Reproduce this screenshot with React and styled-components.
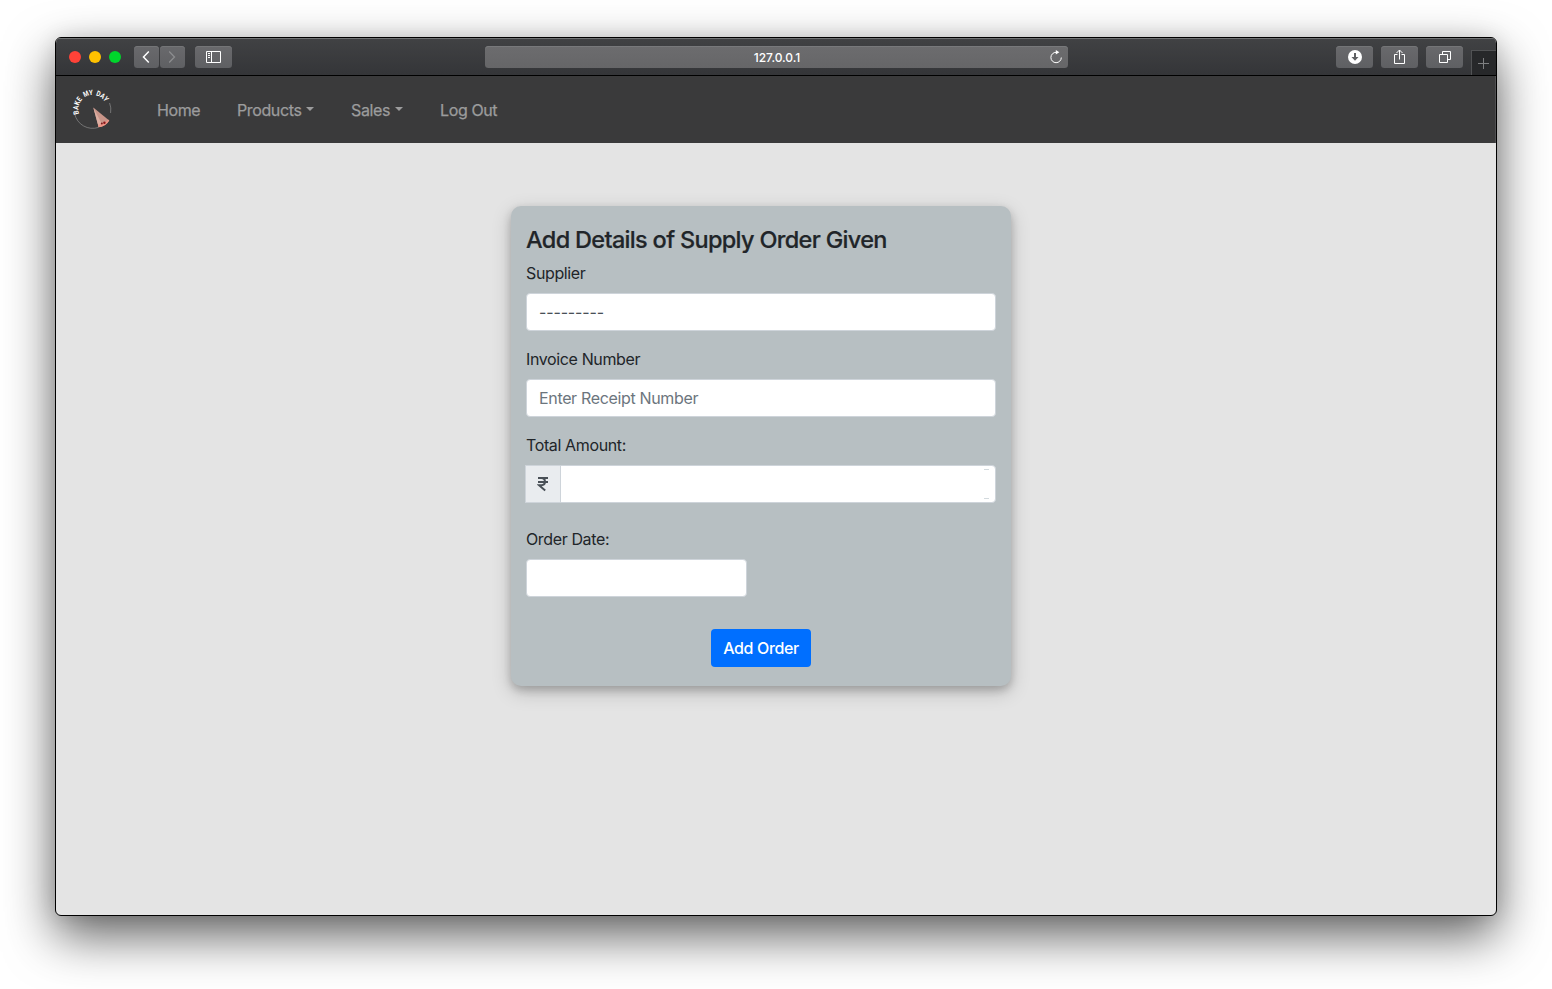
import React from "react";
import styled, { createGlobalStyle } from "styled-components";

const GlobalStyle = createGlobalStyle`
  *, *::before, *::after { box-sizing: border-box; }
  body {
    margin: 0;
    background: #fff;
    color: #212529;
    font: 400 16px/24px Inter, "Liberation Sans", sans-serif;
    overflow: hidden;
  }
  input, select, button { font: inherit; letter-spacing: inherit; }
`;

const Desktop = styled.div`
  width: 1552px;
  height: 989px;
  padding: 37px 55px 73px;
  overflow: hidden;
`;

const Window = styled.main`
  display: flex;
  flex-direction: column;
  width: 1442px;
  height: 879px;
  border: 1px solid #000;
  border-radius: 6px;
  background: #e4e4e4;
  overflow: hidden;
  box-shadow: 0 20px 50px rgba(0, 0, 0, 0.62), 0 0 20px rgba(0, 0, 0, 0.1);
`;

const TitleBar = styled.header`
  display: flex;
  align-items: flex-start;
  flex: none;
  height: 38px;
  padding: 8px 0 0 13px;
  border-bottom: 1px solid #000;
  background: linear-gradient(#414244, #343538);
  box-shadow: inset 0 1px #717374;
`;

const Lights = styled.div`
  display: flex;
  gap: 8px;
  padding-top: 5px;
  margin-right: 13px;
`;

const Light = styled.span`
  width: 12px;
  height: 12px;
  border-radius: 50%;
  background: ${(p) => p.$color};
`;

const ToolButton = styled.button`
  display: flex;
  align-items: center;
  justify-content: center;
  width: ${(p) => p.$width || 37}px;
  height: 22px;
  margin: 0 ${(p) => p.$after || 0}px 0 0;
  padding: 0;
  border: 0;
  border-radius: 3.5px;
  background: linear-gradient(#69696c, #5f6063);
  box-shadow: inset 0 1px #747577;
  color: ${(p) => (p.$dim ? "#8c8d8f" : "#fff")};
  svg { display: block; }
`;

const AddressBar = styled.div`
  display: grid;
  grid-template-columns: 24px 1fr 24px;
  align-items: center;
  width: 583px;
  height: 22px;
  margin: 0 268px 0 253px;
  border-radius: 3.5px;
  background: linear-gradient(#6c6c6e, #666668);
  box-shadow: inset 0 1px #78797b;
  color: #fff;
  font-size: 12px;
  font-weight: 500;
  letter-spacing: -0.05px;
  line-height: 22px;
  text-align: center;
  svg { display: block; margin-left: 5px; }
  span { padding: 1px 0 0 1px; line-height: 21px; }
`;

const NewTab = styled.div`
  display: flex;
  align-items: center;
  width: 25px;
  height: 25px;
  margin: 4px 0 0 8px;
  padding-left: 6px;
  border: solid #515254;
  border-width: 1px 0 0 1px;
  background: #27282a;
  color: #7e7f81;
`;

const NavBar = styled.nav`
  display: grid;
  grid-template-columns: 85px 80px 114px 89px auto;
  align-items: center;
  flex: none;
  height: 67px;
  padding: 1px 0 0 16px;
  background: #3a3a3b;
  box-shadow: inset -1px 0 #505052;
`;

const NavLink = styled.a`
  display: flex;
  align-items: center;
  color: #9c9c9d;
  letter-spacing: -0.38px;
  -webkit-text-stroke: 0.25px;
  white-space: nowrap;
`;

const Caret = styled.i`
  margin: -2px 0 0 5px;
  border-top: 4px solid;
  border-left: 4px solid transparent;
  border-right: 4px solid transparent;
`;

const Card = styled.form`
  display: flex;
  flex-direction: column;
  width: 500px;
  height: 480px;
  margin: 63px 0 0 455px;
  padding: 19px 15px 0;
  border-radius: 10px;
  background: #b7bfc2;
  box-shadow: 0 4px 8px rgba(0, 0, 0, 0.2), 0 6px 20px rgba(0, 0, 0, 0.19);
`;

const Title = styled.h1`
  margin: 0 0 7px;
  font-size: 23.5px;
  font-weight: 500;
  line-height: 29px;
  letter-spacing: -0.68px;
  -webkit-text-stroke: 0.2px;
  white-space: nowrap;
`;

const Field = styled.div`
  display: flex;
  flex-direction: column;
  gap: 8px;
  margin-bottom: ${(p) => p.$after || 16}px;
`;

const Label = styled.label`
  height: 24px;
  letter-spacing: -0.37px;
`;

const Input = styled.input`
  width: ${(p) => p.$width || "100%"};
  min-width: 0;
  height: 38px;
  padding: 6px 12px;
  border: 1px solid #ced4da;
  border-radius: ${(p) => (p.$joined ? "0 4px 4px 0" : "4px")};
  background: ${(p) =>
    p.$joined
      ? "linear-gradient(#d3dade, #d3dade) right 6px top 3px / 5px 1px no-repeat, linear-gradient(#d3dade, #d3dade) right 6px bottom 3px / 5px 1px no-repeat, #fff"
      : "#fff"};
  color: #495057;
  letter-spacing: -0.34px;
  &::placeholder { color: #6c757d; opacity: 1; }
`;

const Select = styled.select`
  appearance: none;
  width: 100%;
  height: 38px;
  padding: 6px 12px;
  border: 1px solid #ced4da;
  border-radius: 4px;
  background: #fff;
  color: #495057;
  letter-spacing: -0.15px;
`;

const InputGroup = styled.div`
  display: flex;
  margin-left: -1px;
`;

const Prefix = styled.span`
  display: flex;
  align-items: center;
  justify-content: center;
  flex: none;
  width: 35px;
  height: 38px;
  border: 1px solid #ced4da;
  border-right: 0;
  background: #e9ecef;
  color: #495057;
`;

const Submit = styled.button`
  align-self: center;
  width: 100px;
  height: 38px;
  padding: 0;
  border: 0;
  border-radius: 4px;
  background: #006fff;
  color: #fff;
  font-weight: 500;
  letter-spacing: -0.35px;
`;

const line = { fill: "none", stroke: "currentColor" };

function Logo() {
  return (
    <svg width="42" height="42" viewBox="0 0 42 42">
      <defs>
        <path id="arc" d="M7.2 24.8 A14.2 14.2 0 1 1 34.8 21" />
      </defs>
      <path d="M2.7 25 A18.4 18.4 0 0 0 26.5 38.4 M38.6 24 A18.4 18.4 0 0 0 37.6 14" fill="none" stroke="#8c8c8c" strokeWidth="0.7" />
      <text fill="#fff" fontFamily="Roboto, sans-serif" fontSize="7.4" fontWeight="700" wordSpacing="1.4">
        <textPath href="#arc" textLength="41.5" lengthAdjust="spacingAndGlyphs">BAKE MY DAY</textPath>
      </text>
      <path d="M21.3 18.5 L37.2 31.5 Q34 36.8 26.7 38.2 Z" fill="#c99589" />
      <path d="M21.3 18.5 L31 37 L26.7 38.2 Z" fill="#dcaea2" />
      <path d="M26.2 35.8 Q33 35.2 36 30.5 L37.3 31.6 Q34 37.5 26.7 38.3 Z" fill="#ee9385" />
      <circle cx="29.8" cy="34.4" r="1" fill="#7f1a1c" />
      <circle cx="32.4" cy="33.8" r="1.2" fill="#8e1619" />
    </svg>
  );
}

function BrowserBar() {
  return (
    <TitleBar>
      <Lights>
        <Light $color="#ff4238" />
        <Light $color="#ffc100" />
        <Light $color="#00d52c" />
      </Lights>
      <ToolButton $width={25} $after={1} aria-label="Back">
        <svg width="11" height="14" viewBox="0 0 11 14" {...line} strokeWidth="1.5"><path d="M7.8 1.5 2.5 7l5.3 5.5" /></svg>
      </ToolButton>
      <ToolButton $width={25} $after={10} $dim aria-label="Forward">
        <svg width="11" height="14" viewBox="0 0 11 14" {...line} strokeWidth="1.3"><path d="M2.2 1.5 7.5 7l-5.3 5.5" /></svg>
      </ToolButton>
      <ToolButton aria-label="Sidebar">
        <svg width="15" height="12" viewBox="0 0 15 12" {...line}>
          <path d="M.5.5h14v11H.5zM5.5.5v11M2 2.5h2M2 4.5h2M2 6.5h2" />
        </svg>
      </ToolButton>
      <AddressBar>
        <i />
        <span>127.0.0.1</span>
        <svg width="14" height="14" viewBox="0 0 14 14" {...line} strokeWidth="1">
          <path d="M7.2 2.3A5.2 5.2 0 1 0 12.3 7.5" />
          <path d="M6.8 0v4.6L10.3 2.3z" fill="#fff" stroke="none" />
        </svg>
      </AddressBar>
      <ToolButton $after={8} aria-label="Downloads">
        <svg width="15" height="14" viewBox="0 0 15 14">
          <circle cx="8" cy="7" r="7" fill="#fff" />
          <path d="M7 3h2v4h2.5L8 10.8 4.5 7H7z" fill="#5f6063" />
        </svg>
      </ToolButton>
      <ToolButton $after={8} aria-label="Share">
        <svg width="13" height="16" viewBox="0 0 13 16" {...line}>
          <path d="M4.5 5.5h-3v9h10v-9h-3M6.5 10.5V1M3.5 4l3-3 3 3" />
        </svg>
      </ToolButton>
      <ToolButton aria-label="Tabs">
        <svg width="13" height="12" viewBox="-1 0 13 12" {...line}>
          <path d="M.5 3.5h8v8h-8zM3.5 3.5v-3h8v8h-3" />
        </svg>
      </ToolButton>
      <NewTab>
        <svg width="11" height="11" viewBox="0 0 11 11" {...line}><path d="M5.5 0v11M0 5.5h11" /></svg>
      </NewTab>
    </TitleBar>
  );
}

export default function App() {
  return (
    <Desktop>
      <GlobalStyle />
      <Window>
        <BrowserBar />
        <NavBar>
          <Logo />
          <NavLink>Home</NavLink>
          <NavLink>Products<Caret /></NavLink>
          <NavLink>Sales<Caret /></NavLink>
          <NavLink>Log Out</NavLink>
        </NavBar>
        <Card>
          <Title>Add Details of Supply Order Given</Title>
          <Field>
            <Label>Supplier</Label>
            <Select><option>---------</option></Select>
          </Field>
          <Field>
            <Label>Invoice Number</Label>
            <Input placeholder="Enter Receipt Number" />
          </Field>
          <Field $after={24}>
            <Label>Total Amount:</Label>
            <InputGroup>
              <Prefix>
                <svg width="12" height="16" viewBox="0 0 12 16" {...line} strokeWidth="2">
                  <path d="M1 2h10M1 6h10M1.2 2h3.3c4.6 0 4.6 7.2 0 7.2H2l6.2 5.3" />
                </svg>
              </Prefix>
              <Input $joined />
            </InputGroup>
          </Field>
          <Field $after={32}>
            <Label>Order Date:</Label>
            <Input $width="221px" />
          </Field>
          <Submit type="button">Add Order</Submit>
        </Card>
      </Window>
    </Desktop>
  );
}
